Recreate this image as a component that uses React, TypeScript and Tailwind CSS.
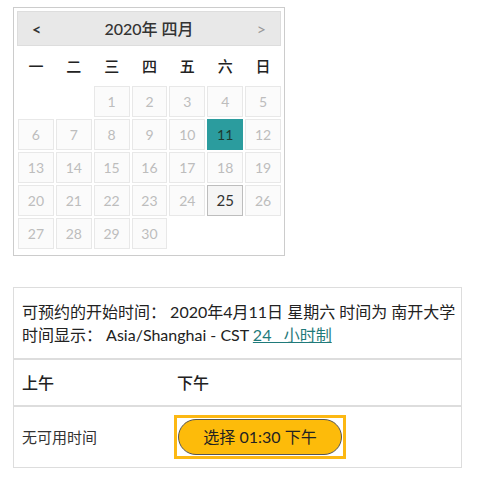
import React from 'react';

// Calendar + available time slot panel

const WEEKDAYS = ['一', '二', '三', '四', '五', '六', '日'];

// April 2020 starts on Wednesday (Monday-first grid)
const DAYS: (number | null)[] = [null, null, ...Array.from({ length: 30 }, (_, i) => i + 1)];

const FONT = { fontFamily: 'Lato, "Noto Sans CJK SC", sans-serif' };

const DayCell: React.FC<{ day: number | null }> = ({ day }) => {
  if (day === null) return <div className="h-[31px]" />;
  if (day === 11) {
    return (
      <div className="h-[31px] flex items-center justify-center bg-[#2b9c9e] border border-[#2b9c9e] text-[14px] text-[#1d3b2e]">
        {day}
      </div>
    );
  }
  if (day === 25) {
    return (
      <div className="h-[31px] flex items-center justify-center bg-[#f5f5f5] border border-[#bdbdbd] text-[15px] text-[#333]">
        {day}
      </div>
    );
  }
  return (
    <div className="h-[31px] flex items-center justify-center bg-[#fbfbfb] border border-[#e8e8e8] text-[14px] text-[#bdbdbd]">
      {day}
    </div>
  );
};

const App: React.FC = () => {
  return (
    <div className="w-[477px] h-[483px] bg-white text-[#222]" style={FONT}>
      {/* Calendar */}
      <div className="ml-[13px] mt-[7px] w-[272px] border border-[#cccccc] p-[3px] pb-[6px]">
        <div className="h-[35px] bg-[#e8e8e8] border border-[#dddddd] flex items-center justify-between px-[14px]">
          <span className="text-[16px] font-bold text-[#333]">&lt;</span>
          <span className="text-[16px] font-medium text-[#333]">2020年 四月</span>
          <span className="text-[16px] text-[#999]">&gt;</span>
        </div>
        <div className="grid grid-cols-7 gap-x-[2px] pl-[1px] h-[39px] items-center mt-[1px]">
          {WEEKDAYS.map((w) => (
            <div key={w} className="text-center text-[15px] font-medium text-[#222]">
              {w}
            </div>
          ))}
        </div>
        <div className="grid grid-cols-7 gap-[2px] pl-[1px]">
          {DAYS.map((d, i) => (
            <DayCell key={i} day={d} />
          ))}
        </div>
      </div>

      {/* Time slots */}
      <div className="ml-[13px] mt-[31px] w-[449px] border border-[#dddddd]">
        <div className="px-[8px] py-[12px] text-[16px] leading-[23px] text-[#222]">
          <div className="whitespace-nowrap">可预约的开始时间： 2020年4月11日 星期六 时间为 南开大学</div>
          <div className="whitespace-nowrap">
            时间显示： Asia/Shanghai - CST{' '}
            <span className="text-[#1f7a7a] underline">24&nbsp;&nbsp;&nbsp;小时制</span>
          </div>
        </div>
        <div className="border-t-2 border-[#dddddd] flex h-[47px] items-center text-[16px] font-medium">
          <div className="w-[163px] pl-[8px]">上午</div>
          <div>下午</div>
        </div>
        <div className="border-t-2 border-[#dddddd] flex h-[62px] items-center">
          <div className="w-[160px] pl-[8px] text-[15px] text-[#333]">无可用时间</div>
          <div className="border-[3px] border-[#fcb813] bg-white p-[1px]">
            <button className="block w-[164px] h-[36px] rounded-full border border-[#555] bg-[#fdbb0a] text-[16px] text-[#222]">
              选择 01:30 下午
            </button>
          </div>
        </div>
      </div>
    </div>
  );
};

export default App;
